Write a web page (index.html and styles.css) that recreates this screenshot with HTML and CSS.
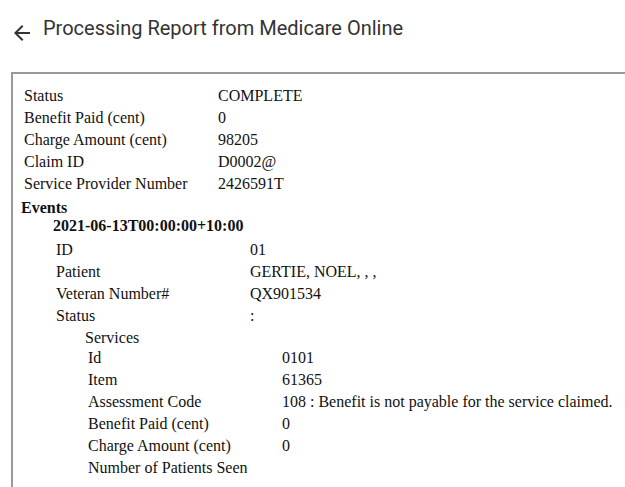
FILE: index.html
```html
<!DOCTYPE html>
<html>
<head>
<meta charset="utf-8">
<link rel="stylesheet" href="styles.css">
</head>
<body>
<header class="header">
  <svg class="back" viewBox="0 0 24 24" width="24" height="24"><path d="M20 11H7.83l5.59-5.59L12 4l-8 8 8 8 1.41-1.41L7.83 13H20v-2z" fill="#333"/></svg>
  <h1 class="title">Processing Report from Medicare Online</h1>
</header>
<main class="box">
  <div class="kv">
    <div>Status</div><div>COMPLETE</div>
    <div>Benefit Paid (cent)</div><div>0</div>
    <div>Charge Amount (cent)</div><div>98205</div>
    <div>Claim ID</div><div>D0002@</div>
    <div>Service Provider Number</div><div>2426591T</div>
  </div>
  <div class="section-title">Events</div>
  <div class="indent">
    <div class="event-date">2021-06-13T00:00:00+10:00</div>
    <div class="kv">
      <div>ID</div><div>01</div>
      <div>Patient</div><div>GERTIE, NOEL, , ,</div>
      <div>Veteran Number#</div><div>QX901534</div>
      <div>Status</div><div>:</div>
    </div>
    <div class="indent">
      <div class="sub-title">Services</div>
      <div class="kv">
        <div>Id</div><div>0101</div>
        <div>Item</div><div>61365</div>
        <div>Assessment Code</div><div>108 : Benefit is not payable for the service claimed.</div>
        <div>Benefit Paid (cent)</div><div>0</div>
        <div>Charge Amount (cent)</div><div>0</div>
        <div>Number of Patients Seen</div><div></div>
      </div>
    </div>
  </div>
</main>
</body>
</html>
```

FILE: styles.css
```css
html, body {
  margin: 0;
  padding: 0;
  background: #fff;
  overflow: hidden;
}
body {
  width: 625px;
  height: 487px;
  display: flex;
  flex-direction: column;
}
.header {
  display: flex;
  align-items: flex-start;
  padding: 16px 0 0 10px;
  height: 56px;
  box-sizing: border-box;
  gap: 9px;
  flex: none;
}
.back {
  margin-top: 5px;
  flex: none;
}
.title {
  margin: 0;
  font-family: Roboto, sans-serif;
  font-weight: 400;
  font-size: 20px;
  line-height: 24px;
  color: #333;
}
.box {
  display: block;
  flex: 1;
  min-height: 0;
  overflow: hidden;
  margin: 16px 0 0 11px;
  border-top: 2px solid #9a9a9a;
  border-left: 2px solid #9a9a9a;
  padding: 11px 8px 0 8px;
  font-family: "Liberation Serif", "Times New Roman", serif;
  font-size: 16px;
  color: #111;
}
.kv {
  display: grid;
  grid-template-columns: 194px auto;
  grid-auto-rows: 22px;
  align-items: center;
  padding: 0 3px;
  line-height: 18px;
  white-space: nowrap;
}
.section-title {
  font-weight: bold;
  line-height: 18px;
  margin-top: 4px;
}
.indent {
  padding-left: 32px;
}
.event-date {
  font-weight: bold;
  line-height: 18px;
  margin-bottom: 4px;
}
.sub-title {
  line-height: 22px;
  height: 20px;
}
```
